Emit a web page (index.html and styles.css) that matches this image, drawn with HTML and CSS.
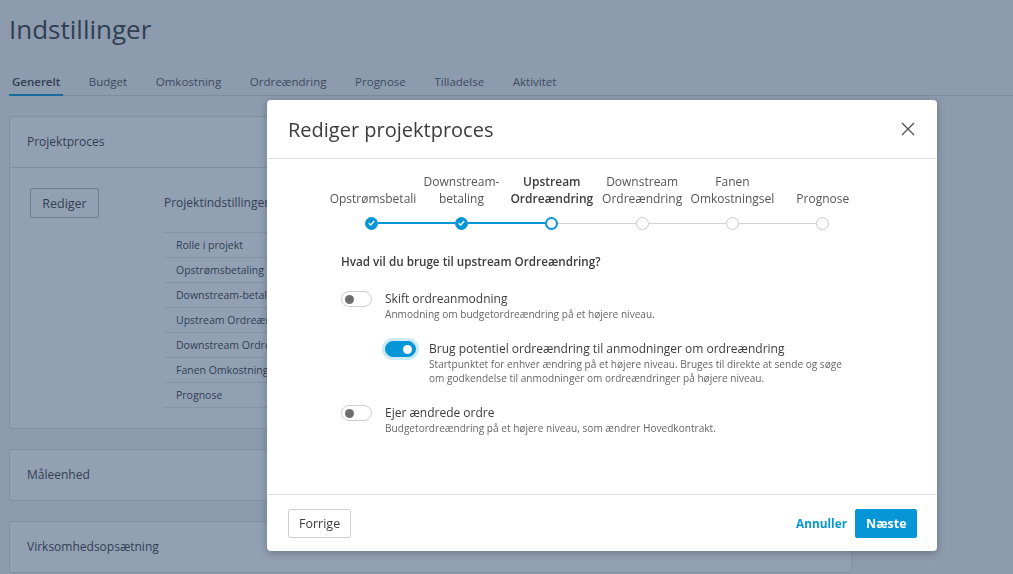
FILE: index.html
```html
<!DOCTYPE html>
<html lang="da">
<head>
  <meta charset="UTF-8">
  <meta name="viewport" content="width=device-width, initial-scale=1.0">
  <title>Indstillinger</title>
  <link rel="stylesheet" href="styles.css">
</head>
<body>

  <div class="page">
    <h1 class="page-title">Indstillinger</h1>

    <nav class="tabs">
      <a class="tab active">Generelt</a>
      <a class="tab">Budget</a>
      <a class="tab">Omkostning</a>
      <a class="tab">Ordreændring</a>
      <a class="tab">Prognose</a>
      <a class="tab">Tilladelse</a>
      <a class="tab">Aktivitet</a>
    </nav>

    <div class="card">
      <div class="card-header">Projektproces</div>
      <div class="card-body">
        <button class="btn">Rediger</button>
        <div class="settings">
          <div class="settings-title">Projektindstillinger</div>
          <ul class="settings-list">
            <li>Rolle i projekt</li>
            <li>Opstrømsbetaling</li>
            <li>Downstream-betaling</li>
            <li>Upstream Ordreændring</li>
            <li>Downstream Ordreændring</li>
            <li>Fanen Omkostningsel</li>
            <li>Prognose</li>
          </ul>
        </div>
      </div>
    </div>

    <div class="card">
      <div class="card-header no-border">Måleenhed</div>
    </div>

    <div class="card">
      <div class="card-header no-border">Virksomhedsopsætning</div>
    </div>
  </div>

  <div class="overlay"></div>

  <div class="modal">
    <div class="modal-header">
      <h2>Rediger projektproces</h2>
      <button class="close" aria-label="Luk">
        <svg width="14" height="14" viewBox="0 0 14 14"><path d="M1 1L13 13M13 1L1 13" stroke="#555" stroke-width="1.4" fill="none"/></svg>
      </button>
    </div>

    <div class="modal-body">
      <div class="stepper">
        <div class="step done">
          <div class="step-label"><span>Opstrømsbetaling</span></div>
          <div class="step-marker">
            <span class="line line-left hidden"></span>
            <span class="dot"><svg width="7" height="6" viewBox="0 0 7 6"><path d="M0.8 3.2L2.7 5L6.2 1" stroke="#fff" stroke-width="1.4" fill="none"/></svg></span>
            <span class="line line-right"></span>
          </div>
        </div>
        <div class="step done">
          <div class="step-label"><span>Downstream-betaling</span></div>
          <div class="step-marker">
            <span class="line line-left"></span>
            <span class="dot"><svg width="7" height="6" viewBox="0 0 7 6"><path d="M0.8 3.2L2.7 5L6.2 1" stroke="#fff" stroke-width="1.4" fill="none"/></svg></span>
            <span class="line line-right"></span>
          </div>
        </div>
        <div class="step current">
          <div class="step-label"><span>Upstream Ordreændring</span></div>
          <div class="step-marker">
            <span class="line line-left"></span>
            <span class="dot"></span>
            <span class="line line-right"></span>
          </div>
        </div>
        <div class="step">
          <div class="step-label"><span>Downstream Ordreændring</span></div>
          <div class="step-marker">
            <span class="line line-left"></span>
            <span class="dot"></span>
            <span class="line line-right"></span>
          </div>
        </div>
        <div class="step">
          <div class="step-label"><span>Fanen Omkostningsel</span></div>
          <div class="step-marker">
            <span class="line line-left"></span>
            <span class="dot"></span>
            <span class="line line-right"></span>
          </div>
        </div>
        <div class="step">
          <div class="step-label"><span>Prognose</span></div>
          <div class="step-marker">
            <span class="line line-left"></span>
            <span class="dot"></span>
            <span class="line line-right hidden"></span>
          </div>
        </div>
      </div>

      <div class="options">
        <p class="question">Hvad vil du bruge til upstream Ordreændring?</p>

        <div class="option">
          <span class="toggle"></span>
          <div class="option-text">
            <div class="option-title">Skift ordreanmodning</div>
            <div class="option-desc">Anmodning om budgetordreændring på et højere niveau.</div>
          </div>
        </div>

        <div class="option nested">
          <span class="toggle on"></span>
          <div class="option-text">
            <div class="option-title">Brug potentiel ordreændring til anmodninger om ordreændring</div>
            <div class="option-desc">Startpunktet for enhver ændring på et højere niveau. Bruges til direkte at sende og søge om godkendelse til anmodninger om ordreændringer på højere niveau.</div>
          </div>
        </div>

        <div class="option">
          <span class="toggle"></span>
          <div class="option-text">
            <div class="option-title">Ejer ændrede ordre</div>
            <div class="option-desc">Budgetordreændring på et højere niveau, som ændrer Hovedkontrakt.</div>
          </div>
        </div>
      </div>
    </div>

    <div class="modal-footer">
      <button class="btn">Forrige</button>
      <div class="footer-right">
        <button class="link-btn">Annuller</button>
        <button class="btn primary">Næste</button>
      </div>
    </div>
  </div>

</body>
</html>
```

FILE: styles.css
```css
body {
  font-family: 'Open Sans', sans-serif;
  background: #f4f4f4;
  color: #3c3c3c;
  margin: 0;
  padding: 0;
  overflow: hidden;
}

.page {
  padding: 0 161px 0 9px;
}

.page-title {
  font-size: 26px;
  font-weight: 400;
  margin: 0;
  padding-top: 12px;
  line-height: 34px;
  color: #3c3c3c;
}

.tabs {
  display: flex;
  gap: 22.6px;
  margin-top: 26px;
  margin-right: -161px;
  border-bottom: 1px solid #d8d8d8;
}

.tab {
  font-size: 11.5px;
  line-height: 17px;
  padding: 1px 3px 4px;
  color: #555;
  border-bottom: 2px solid transparent;
  margin-bottom: -1px;
}

.tab.active {
  font-weight: 600;
  color: #3c3c3c;
  border-bottom-color: #0696d7;
}

.card {
  background: #fff;
  border: 1px solid #dcdcdc;
  border-radius: 3px;
  margin-top: 20px;
}

.card-header {
  height: 50px;
  line-height: 50px;
  padding-left: 17px;
  font-size: 12px;
  border-bottom: 1px solid #dcdcdc;
}

.card-header.no-border {
  border-bottom: none;
}

.card-body {
  display: flex;
  padding: 20px;
  gap: 65px;
}

.btn {
  font-family: inherit;
  font-size: 12.5px;
  height: 30px;
  padding: 0 10px;
  background: #fff;
  color: #3c3c3c;
  border: 1px solid #cfcfcf;
  border-radius: 2px;
}

.card-body .btn {
  width: 69px;
  border-color: #b8b8b8;
}

.settings {
  flex: 1;
}

.settings-title {
  font-size: 12px;
  line-height: 30px;
}

.settings-list {
  list-style: none;
  margin: 14px 0 0;
  padding: 0;
  width: 320px;
  font-size: 10.5px;
  border-bottom: 1px solid #e4e4e4;
}

.settings-list li {
  border-top: 1px solid #e4e4e4;
  height: 24px;
  line-height: 24px;
  padding-left: 12px;
}

.overlay {
  position: fixed;
  inset: 0;
  background: rgba(37, 65, 104, 0.5);
}

.modal {
  position: fixed;
  left: 267px;
  top: 100px;
  width: 670px;
  height: 451px;
  background: #fff;
  border-radius: 4px;
  box-shadow: 0 2px 8px rgba(0,0,0,0.25);
  display: flex;
  flex-direction: column;
}

.modal-header {
  height: 58px;
  display: flex;
  align-items: center;
  justify-content: space-between;
  padding: 0 22px 0 21px;
  border-bottom: 1px solid #dedede;
}

.modal-header h2 {
  font-size: 20px;
  font-weight: 400;
  margin: 0;
  color: #3c3c3c;
}

.close {
  background: none;
  border: none;
  padding: 0;
  width: 14px;
  height: 14px;
  display: flex;
}

.modal-body {
  flex: 1;
  padding-top: 13px;
}

.stepper {
  display: flex;
  width: 542px;
  margin-left: 59px;
}

.step {
  flex: 1;
  display: flex;
  flex-direction: column;
  align-items: center;
}

.step-label {
  width: 84px;
  height: 35px;
  display: flex;
  flex-direction: column;
  justify-content: flex-end;
  text-align: center;
  font-size: 12px;
  line-height: 17px;
  color: #555;
  overflow: hidden;
}

.step:first-child .step-label {
  width: 86px;
  margin-left: 3px;
}

.step.current .step-label {
  font-weight: 600;
  color: #3c3c3c;
}

.step-marker {
  align-self: stretch;
  display: flex;
  align-items: center;
  margin-top: 9px;
  height: 14px;
}

.line {
  flex: 1;
  height: 1px;
  background: #d4d4d4;
}

.line.hidden {
  visibility: hidden;
}

.step.done .line,
.step.current .line-left {
  height: 2px;
  background: #0696d7;
}

.dot {
  width: 13px;
  height: 13px;
  box-sizing: border-box;
  border-radius: 50%;
  border: 1px solid #c8c8c8;
  background: #fff;
  display: flex;
  align-items: center;
  justify-content: center;
}

.step.done .dot {
  background: #0696d7;
  border-color: #0696d7;
}

.step.current .dot {
  border: 2px solid #0696d7;
}

.options {
  margin: 23px 0 0 74px;
}

.question {
  font-size: 11.7px;
  line-height: 17px;
  font-weight: 600;
  margin: 0 0 20px;
  color: #3c3c3c;
}

.option {
  display: flex;
  gap: 13px;
  margin-bottom: 19px;
}

.option.nested {
  margin-left: 44px;
}

.toggle {
  flex: none;
  width: 31px;
  height: 16px;
  margin-top: 1px;
  box-sizing: border-box;
  border: 1px solid #cfcfcf;
  border-radius: 8px;
  background: #fff;
  display: flex;
  align-items: center;
  padding: 0 3px;
}

.toggle::after {
  content: "";
  width: 9px;
  height: 9px;
  border-radius: 50%;
  background: #6e6e6e;
}

.toggle.on {
  background: #0696d7;
  border-color: #0696d7;
  justify-content: flex-end;
  box-shadow: 0 0 0 3px rgba(6, 150, 215, 0.2);
}

.toggle.on::after {
  background: #fff;
}

.option-title {
  font-size: 12px;
  line-height: 17px;
  color: #3c3c3c;
}

.option-desc {
  font-size: 10.1px;
  line-height: 14px;
  color: #666;
  max-width: 422px;
}

.modal-footer {
  height: 56px;
  border-top: 1px solid #dedede;
  display: flex;
  align-items: center;
  justify-content: space-between;
  padding: 0 20px 0 21px;
}

.footer-right {
  display: flex;
  align-items: center;
  gap: 8px;
}

.link-btn {
  font-family: inherit;
  font-size: 11.8px;
  font-weight: 700;
  color: #0696d7;
  background: none;
  border: none;
  padding: 0;
}

.btn.primary {
  background: #0696d7;
  border-color: #0696d7;
  color: #fff;
  font-weight: 700;
  width: 62px;
}

.modal-footer .btn {
  height: 29px;
}
```
